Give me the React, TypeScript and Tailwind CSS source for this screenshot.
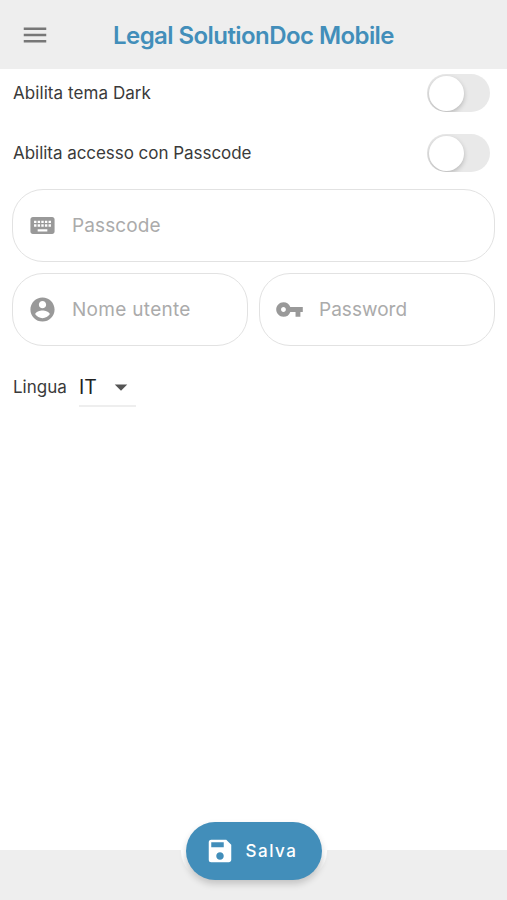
import { useState, type ReactNode } from 'react';
import { MdArrowDropDown, MdMenu, MdSave, MdVpnKey } from 'react-icons/md';

interface ToggleRowProps {
  label: string;
  labelClass: string;
  checked: boolean;
  onChange: (value: boolean) => void;
}

function ToggleRow({ label, labelClass, checked, onChange }: ToggleRowProps) {
  return (
    <div className="flex h-[60px] items-start justify-between pt-[5px] pr-[17px] pl-[13px]">
      <span className={`text-[17px] leading-[38px] text-[#3a3a3a] ${labelClass}`}>{label}</span>
      <button
        role="switch"
        aria-checked={checked}
        aria-label={label}
        onClick={() => onChange(!checked)}
        className={`flex h-[38px] w-[63px] items-center overflow-hidden rounded-full px-[2px] ${checked ? 'justify-end bg-[#428eba]' : 'bg-[#e9e9e9]'}`}
      >
        <span className="size-[35px] rounded-full bg-white shadow-[0_2px_5px_rgba(0,0,0,0.22)]" />
      </button>
    </div>
  );
}

function KeyboardIcon() {
  return (
    <svg viewBox="0 0 24 24" width="1em" height="1em" fill="currentColor">
      <path d="M20 5H4c-1.1 0-1.99.9-1.99 2L2 17c0 1.1.9 2 2 2h16c1.1 0 2-.9 2-2V7c0-1.1-.9-2-2-2zm-9 3h2v2h-2V8zm0 3h2v2h-2v-2zM8 8h2v2H8V8zm0 3h2v2H8v-2zm-1 2H5v-2h2v2zm0-3H5V8h2v2zm9 7H8v-2h8v2zm0-4h-2v-2h2v2zm0-3h-2V8h2v2zm3 3h-2v-2h2v2zm0-3h-2V8h2v2z" />
    </svg>
  );
}

function AccountIcon() {
  return (
    <svg viewBox="0 0 24 24" width="1em" height="1em" fill="currentColor">
      <path d="M12 2C6.48 2 2 6.48 2 12s4.48 10 10 10 10-4.48 10-10S17.52 2 12 2zm0 3c1.66 0 3 1.34 3 3s-1.34 3-3 3-3-1.34-3-3 1.34-3 3-3zm0 14.2c-2.5 0-4.71-1.28-6-3.22.03-1.99 4-3.08 6-3.08 1.99 0 5.97 1.09 6 3.08-1.29 1.94-3.5 3.22-6 3.22z" />
    </svg>
  );
}

interface FieldProps {
  icon: ReactNode;
  placeholder: string;
  inputClass: string;
  type?: string;
}

function Field({ icon, placeholder, inputClass, type = 'text' }: FieldProps) {
  return (
    <label className="flex h-[73px] w-full min-w-0 items-center rounded-[31px] border border-[#e2e2e2] pl-[15px] text-[29px] text-[#999999]">
      {icon}
      <input
        type={type}
        placeholder={placeholder}
        className={`ml-[15px] min-w-0 flex-1 bg-transparent pt-[2px] text-[19px] text-[#3a3a3a] outline-none placeholder:text-[#ababab] ${inputClass}`}
      />
    </label>
  );
}

export default function App() {
  const [dark, setDark] = useState(false);
  const [passcode, setPasscode] = useState(false);

  return (
    <div className="flex h-screen flex-col overflow-hidden bg-white font-['Inter',sans-serif]">
      <header className="grid h-[69px] shrink-0 grid-cols-[70px_1fr_70px] items-center bg-[#eeeeee]">
        <button aria-label="Menu" className="flex justify-center text-[30px] text-[#777777]">
          <MdMenu />
        </button>
        <h1 className="pt-[2px] text-center text-[24px] font-semibold tracking-[-0.57px] whitespace-nowrap text-[#428eba]">
          Legal SolutionDoc Mobile
        </h1>
      </header>

      <main className="flex-1">
        <ToggleRow label="Abilita tema Dark" labelClass="tracking-[0.07px]" checked={dark} onChange={setDark} />
        <ToggleRow label="Abilita accesso con Passcode" labelClass="tracking-[-0.04px]" checked={passcode} onChange={setPasscode} />

        <div className="flex flex-col gap-[11px] px-[12px]">
          <Field icon={<KeyboardIcon />} placeholder="Passcode" inputClass="tracking-[0.1px]" />
          <div className="flex gap-[11px]">
            <Field icon={<AccountIcon />} placeholder="Nome utente" inputClass="tracking-[0.3px]" />
            <Field icon={<MdVpnKey />} placeholder="Password" type="password" inputClass="tracking-[0.02px]" />
          </div>
        </div>

        <div className="mt-[22px] flex items-center pl-[13px]">
          <span className="w-[66px] text-[17px] text-[#3a3a3a]">Lingua</span>
          <button className="flex h-[39px] w-[57px] items-center justify-between border-b-2 border-[#eeeeee] text-[19.5px] text-[#222222]">
            <span className="pt-[2px]">IT</span>
            <MdArrowDropDown className="text-[30px] text-[#555555]" />
          </button>
        </div>
      </main>

      <footer className="flex h-[50px] shrink-0 justify-center bg-[#eeeeee]">
        {/* white cutout in the bar around the button, fading out under its shadow */}
        <div className="-mt-[28px] h-[58px] rounded-full bg-linear-to-b from-white from-55% to-[#eeeeee] to-90% px-[5px]">
          <button className="flex h-[58px] w-[136px] items-center rounded-full bg-[#428eba] pl-[19px] text-[17px] font-medium tracking-[1.5px] text-white shadow-[0_4px_7px_rgba(0,0,0,0.18)]">
            <MdSave className="mr-[11px] text-[30px]" />
            <span className="pt-[2px]">Salva</span>
          </button>
        </div>
      </footer>
    </div>
  );
}
